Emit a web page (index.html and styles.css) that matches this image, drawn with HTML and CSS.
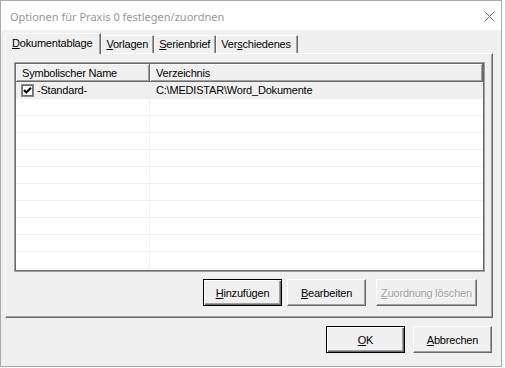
FILE: index.html
```html
<!DOCTYPE html>
<html lang="de">
<head>
<meta charset="utf-8">
<title>Optionen</title>
<link rel="stylesheet" href="styles.css">
</head>
<body>
<div class="window">
  <div class="titlebar">
    <span class="title">Optionen für Praxis 0 festlegen/zuordnen</span>
    <svg class="close" width="11" height="11" viewBox="0 0 11 11"><path d="M0.5 0.5 L10.5 10.5 M10.5 0.5 L0.5 10.5" stroke="#707070" stroke-width="1" fill="none"/></svg>
  </div>
  <div class="client">
    <div class="tabs">
      <div class="tab active"><u>D</u>okumentablage</div>
      <div class="tab"><u>V</u>orlagen</div>
      <div class="tab"><u>S</u>erienbrief</div>
      <div class="tab last">Ver<u>s</u>chiedenes</div>
    </div>
    <div class="panel">
      <div class="list">
        <div class="list-inner">
          <div class="lhead">
            <div class="hc c1">Symbolischer Name</div>
            <div class="hc c2">Verzeichnis</div>
          </div>
          <div class="row sel">
            <div class="cell c1"><span class="chk"><svg width="9" height="9" viewBox="0 0 9 9"><path d="M1 4 L3.3 6.5 L8 1.8" stroke="#000" stroke-width="2" fill="none"/></svg></span>-Standard-</div>
            <div class="cell c2">C:\MEDISTAR\Word_Dokumente</div>
          </div>
          <div class="row"><div class="cell c1"></div><div class="cell c2"></div></div>
          <div class="row"><div class="cell c1"></div><div class="cell c2"></div></div>
          <div class="row"><div class="cell c1"></div><div class="cell c2"></div></div>
          <div class="row"><div class="cell c1"></div><div class="cell c2"></div></div>
          <div class="row"><div class="cell c1"></div><div class="cell c2"></div></div>
          <div class="row"><div class="cell c1"></div><div class="cell c2"></div></div>
          <div class="row"><div class="cell c1"></div><div class="cell c2"></div></div>
          <div class="row"><div class="cell c1"></div><div class="cell c2"></div></div>
          <div class="row"><div class="cell c1"></div><div class="cell c2"></div></div>
          <div class="row"><div class="cell c1"></div><div class="cell c2"></div></div>
        </div>
      </div>
      <div class="panel-btns">
        <button class="btn default w79"><u>H</u>inzufügen</button>
        <button class="btn w79 gap5"><u>B</u>earbeiten</button>
        <button class="btn w101 gap10 disabled" disabled><u>Z</u>uordnung löschen</button>
      </div>
    </div>
    <div class="dlg-btns">
      <button class="btn default w79"><u>O</u>K</button>
      <button class="btn w79 gap9"><u>A</u>bbrechen</button>
    </div>
  </div>
</div>
</body>
</html>
```

FILE: styles.css
```css
* { box-sizing: border-box; }
html, body { margin: 0; padding: 0; background: #fff; }
body {
  font-family: Tahoma, "Liberation Sans", Arial, sans-serif;
  font-size: 11px;
  letter-spacing: -0.2px;
  color: #000;
}
.window {
  width: 502px;
  height: 367px;
  border: 1px solid #aaaaaa;
  display: flex;
  flex-direction: column;
  background: #f0f0f0;
}
.titlebar {
  height: 29px;
  background: #fff;
  display: flex;
  align-items: center;
  justify-content: space-between;
  padding-left: 9px;
  padding-right: 6px;
}
.title {
  font-family: "Segoe UI", "Noto Sans", "Liberation Sans", sans-serif;
  font-size: 11px;
  letter-spacing: 0;
  color: #969696;
  padding-top: 1px;
}
.close { display: block; margin-top: 1px; }
.client {
  flex: 1;
  padding: 3px 9px 0 4px;
  display: flex;
  flex-direction: column;
}
.tabs {
  display: flex;
  align-items: flex-end;
  height: 20px;
}
.tab {
  height: 18px;
  line-height: 17px;
  padding: 0 5px 0 4px;
  border-top: 1px solid #fff;
  border-left: 1px solid #fff;
  border-right: 1px solid #696969;
  box-shadow: inset -1px 0 0 #a0a0a0;
  white-space: nowrap;
}
.tab.last { padding-right: 6px; }
.tab.active {
  height: 21px;
  line-height: 18px;
  padding: 0 8px 0 6px;
  margin-bottom: -1px;
  background: #f0f0f0;
  position: relative;
  z-index: 1;
}
.panel {
  width: 488px;
  height: 265px;
  border-top: 1px solid #fff;
  border-left: 1px solid #fff;
  border-right: 1px solid #696969;
  border-bottom: 1px solid #696969;
  box-shadow: inset -1px -1px 0 #a0a0a0;
  padding: 8px 0 0 8px;
  display: flex;
  flex-direction: column;
}
.list {
  width: 471px;
  height: 210px;
  border: 1px solid #a0a0a0;
  background: #fff;
}
.list-inner {
  height: 100%;
  border: 1px solid #696969;
  overflow: hidden;
}
.lhead {
  display: flex;
  height: 18px;
}
.hc {
  height: 18px;
  line-height: 18px;
  padding-left: 6px;
  background: #f0f0f0;
  border-right: 1px solid #696969;
  border-bottom: 1px solid #696969;
  box-shadow: inset 1px 1px 0 #fff, inset -1px -1px 0 #a0a0a0;
  white-space: nowrap;
}
.c1 { width: 134px; flex: none; }
.c2 { flex: 1; }
.row {
  display: flex;
  height: 17px;
}
.cell {
  height: 17px;
  line-height: 17px;
  border-bottom: 1px solid #f0f0f0;
  white-space: nowrap;
}
.row .c1 { border-right: 1px solid #f0f0f0; padding-left: 5px; display: flex; align-items: center; }
.row .c2 { padding-left: 6px; }
.row.sel { background: #f0f0f0; }
.row.sel .cell { line-height: 16px; }
.chk {
  width: 13px;
  height: 13px;
  border: 1px solid #8a8a8a;
  box-shadow: inset 0 0 0 1px #6a6a6a;
  background: #fff;
  display: flex;
  align-items: center;
  justify-content: center;
  margin-right: 3px;
  margin-top: 1px;
}
.chk svg { display: block; }
.panel-btns {
  display: flex;
  justify-content: flex-end;
  padding-right: 15px;
  margin-top: 7px;
}
.dlg-btns {
  display: flex;
  justify-content: flex-end;
  margin-top: 8px;
}
.btn {
  height: 27px;
  font: inherit;
  letter-spacing: -0.2px;
  color: #000;
  background: #f0f0f0;
  border: 1px solid;
  border-color: #fff #696969 #696969 #fff;
  box-shadow: inset -1px -1px 0 #a0a0a0;
  padding: 0;
  margin: 0;
  text-align: center;
}
.btn.default {
  border: 1px solid #000;
  box-shadow: inset 1px 1px 0 #fff, inset -1px -1px 0 #696969, inset -2px -2px 0 #a0a0a0;
}
.btn.disabled {
  color: #a0a0a0;
  text-shadow: 1px 1px 0 #fff;
}
.w79 { width: 79px; }
.w101 { width: 101px; }
.gap5 { margin-left: 5px; }
.gap9 { margin-left: 8px; }
.gap10 { margin-left: 10px; }
```
